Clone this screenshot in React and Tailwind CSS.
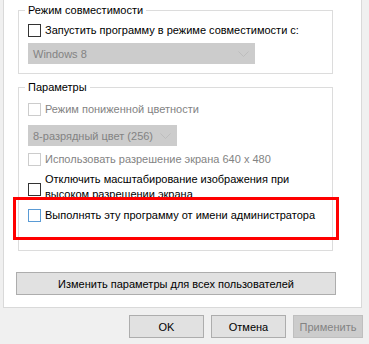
import React from "react";

const font = { fontFamily: '"Liberation Sans", Arial, sans-serif' };

const Box = ({ disabled, focus }) => (
  <span
    className={
      "block w-[13px] h-[13px] shrink-0 bg-white border " +
      (focus ? "border-[#5a9bd5]" : disabled ? "border-[#cccccc]" : "border-[#333333]")
    }
  />
);

const Check = ({ label, disabled, focus, className = "" }) => (
  <div className={"flex items-center h-[16px] whitespace-nowrap " + className}>
    <div className="ml-[9px]">
      <Box disabled={disabled} focus={focus} />
    </div>
    <span className={"ml-[4px] " + (disabled ? "text-[#838383]" : "text-black")}>{label}</span>
  </div>
);

const Chevron = () => (
  <svg width="11" height="6" viewBox="0 0 11 6" className="shrink-0">
    <path d="M0.5 0.5 L5.5 5.5 L10.5 0.5" fill="none" stroke="#bdbdbd" strokeWidth="1" />
  </svg>
);

const Select = ({ value, width, className = "" }) => (
  <div
    className={
      "ml-[9px] h-[21px] flex items-center justify-between whitespace-nowrap bg-[#cccccc] border border-[#cccccc] pl-[4px] pr-[5px] text-[#838383] " +
      className
    }
    style={{ width }}
  >
    <span>{value}</span>
    <Chevron />
  </div>
);

const Btn = ({ children, disabled, className = "" }) => (
  <button
    className={
      "h-[23px] border text-[11px] whitespace-nowrap " +
      (disabled
        ? "bg-[#cccccc] border-[#bfbfbf] text-[#838383]"
        : "bg-[#e1e1e1] border-[#adadad] text-black") +
      " " +
      className
    }
  >
    {children}
  </button>
);

export default function App() {
  return (
    <div
      className="relative w-[369px] h-[344px] bg-[#f0f0f0] overflow-hidden text-[11px] leading-[16px] text-black"
      style={font}
    >
      <div className="ml-[3px] w-[359px] h-[308px] bg-white border-x border-b border-[#d9d9d9] pl-[12px] pt-[2px]">
        <fieldset className="ml-[2px] w-[315px] border border-[#dcdcdc] pb-[9px]">
          <legend className="ml-[6px] px-[3px]">Режим совместимости</legend>
          <Check className="mt-[4px]" label="Запустить программу в режиме совместимости с:" />
          <Select className="mt-[5px]" width={227} value="Windows 8" />
        </fieldset>

        <fieldset className="ml-[2px] mt-[5px] w-[315px] border border-[#dcdcdc] pb-[27px]">
          <legend className="ml-[6px] px-[3px]">Параметры</legend>
          <Check className="mt-[6px]" disabled label="Режим пониженной цветности" />
          <Select className="mt-[8px] h-[20px]" width={149} value="8-разрядный цвет (256)" />
          <Check className="mt-[5px]" disabled label="Использовать разрешение экрана 640 x 480" />
          <div className="flex mt-[5px] whitespace-nowrap">
            <div className="ml-[9px] mt-[11px]">
              <Box />
            </div>
            <span className="ml-[4px] leading-[15px]">
              Отключить масштабирование изображения при
              <br />
              высоком разрешении экрана
            </span>
          </div>
          <Check className="mt-[5px]" focus label="Выполнять эту программу от имени администратора" />
        </fieldset>

        <Btn className="mt-[21px] w-[320px] h-[21px]">Изменить параметры для всех пользователей</Btn>
      </div>

      <div className="flex justify-end gap-[7px] mt-[7px] pr-[6px]">
        <Btn className="w-[75px]">OK</Btn>
        <Btn className="w-[75px]">Отмена</Btn>
        <Btn disabled className="w-[70px]">Применить</Btn>
      </div>

      <div className="absolute left-[13px] top-[197px] w-[326px] h-[43px] border-[3px] border-[#ff0000] pointer-events-none" />
    </div>
  );
}
